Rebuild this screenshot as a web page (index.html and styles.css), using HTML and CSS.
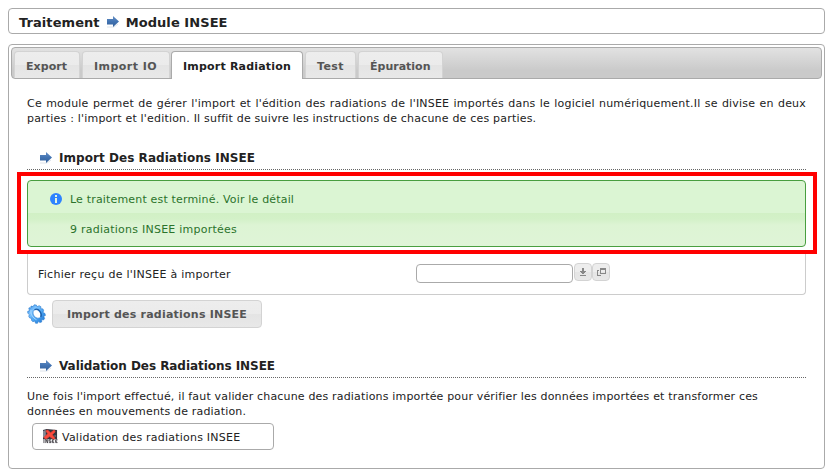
FILE: index.html
```html
<!DOCTYPE html>
<html lang="fr">
<head>
<meta charset="utf-8">
<title>Module INSEE</title>
<link rel="stylesheet" href="styles.css">
</head>
<body>
<svg class="defs" width="0" height="0" aria-hidden="true">
  <defs>
    <linearGradient id="blue" x1="0" y1="0" x2="0" y2="1"><stop offset="0" stop-color="#6790c4"/><stop offset=".5" stop-color="#4273b2"/><stop offset="1" stop-color="#335f99"/></linearGradient>
    <symbol id="arrow" viewBox="0 0 14 14"><path d="M1 12h7l4-3" stroke="#dde3ea" fill="none"/><path d="M1 4h6V1l6 5.500-6 5.500V9.500H1z" fill="url(#blue)"/></symbol>
  </defs>
</svg>
<header class="crumbs">Traitement <svg class="arrow"><use href="#arrow"/></svg> Module INSEE</header>
<main class="panel">
  <nav class="tabs">
    <a class="tab tab-export">Export</a>
    <a class="tab tab-io">Import IO</a>
    <a class="tab tab-active">Import Radiation</a>
    <a class="tab tab-test">Test</a>
    <a class="tab tab-epuration">Épuration</a>
  </nav>
  <div class="content">
    <p class="intro">Ce module permet de gérer l'import et l'édition des radiations de l'INSEE importés dans le logiciel numériquement.Il se divise en deux parties : l'import et l'edition. Il suffit de suivre les instructions de chacune de ces parties.</p>
    <h2 class="title title-import"><svg class="arrow"><use href="#arrow"/></svg>Import Des Radiations INSEE</h2>
    <div class="highlight">
      <div class="message">
        <svg class="info" viewBox="0 0 12 12"><circle cx="6" cy="6" r="6" fill="#2e83ff"/><path d="M5 2h2v2H5zM5 5h2v5H5z" fill="#e4f5e0"/></svg>
        <div class="message-text"><p class="done">Le traitement est terminé. Voir le détail</p><p class="count">9 radiations INSEE importées</p></div>
      </div>
    </div>
    <form class="fields">
      <label class="label" for="file">Fichier reçu de l'INSEE à importer</label>
      <input class="file" id="file" type="text">
      <button class="mini" type="button" aria-label="Charger"><svg viewBox="0 0 16 16"><path d="M7 4h2v3h2v1h-1v1H9v1H7V9H6V8H5V7h2zM5 11h6v1H5z" fill="#888"/></svg></button>
      <button class="mini" type="button" aria-label="Ouvrir"><svg viewBox="0 0 16 16"><path d="M7 4h6v6H7zM8 6v3h4V6zM4 6h2v1H5v4h3v1H4z" fill="#888" fill-rule="evenodd"/></svg></button>
    </form>
    <div class="actions">
      <svg class="gear" viewBox="0 0 20 20">
        <defs><linearGradient id="gearfill" x1="0" y1="0" x2="1" y2="1"><stop offset="0" stop-color="#2e88e2"/><stop offset=".3" stop-color="#7fc4ff"/><stop offset=".6" stop-color="#48a3f2"/><stop offset="1" stop-color="#1d6fce"/></linearGradient></defs>
        <path d="M4 2l2 .6L7.200.8l2.200.3.7 1.700 2-1.100 1.800 1-.1 2 2.200.2.700 2-1 1.400 2.300 1.200.4 2-1.700.8.900 2.300-1.100 1.400-1.900-.5.100 2.500-1.800.6-1.400-1.300-1 2-2-.1-.6-2.200-2 .7-1.500-1.400.3-1.900-2-.4-1.100-1.900 1-1.300-1.800-1.500-.1-2 1.900-.7-.800-2L2 3.800l1.900.1zM7 6.100c-1.500 1.600-1.200 4.400.4 6.300 1.900 2 4.800 2.400 6 .9 1.100-1.600.3-4.800-1.400-6.300-1.500-1.500-3.800-1.800-5-.9z" fill="url(#gearfill)" fill-rule="evenodd" stroke="#2779cc" stroke-width=".6"/>
        <path d="M4 6c-.8 3.700 1.700 8 5.500 9.700" fill="none" stroke="#b5deff" stroke-width=".8"/>
        <path d="M7.500 5.600c1.700-.7 4-.1 5.300 1.600 1.400 1.800 1.800 4.300 1 5.900" fill="none" stroke="#1b5da8" stroke-width="1.200"/>
      </svg>
      <button class="submit" type="button">Import des radiations INSEE</button>
    </div>
    <h2 class="title title-validation"><svg class="arrow"><use href="#arrow"/></svg>Validation Des Radiations INSEE</h2>
    <p class="explain">Une fois l'import effectué, il faut valider chacune des radiations importée pour vérifier les données importées et transformer ces données en mouvements de radiation.</p>
    <a class="validation">
      <svg class="insee" viewBox="0 0 16 16">
        <path d="M0 1l4-1 11 1v10H0z" fill="#343640"/>
        <path d="M0 2l3-1v8H0zM10 3h2v1h-2zM12 7h2v1h-2z" fill="#858894"/>
        <path d="M3 2l2-1 3 3 4-3 1 2-3 3 3 4-2 1-4-3-4 3-2-2 4-4z" fill="#fa4b3e" stroke="#e83a30" stroke-width=".7"/>
        <path d="M1 11v4M3 15v-4l2 4v-4M8.500 11.500h-2V13h2v1.500h-2M12 11.500h-2v3h2M10 13h1.500M15.500 11.500h-2v3h2M13.500 13H15" fill="none" stroke="#36343b" stroke-width=".9"/>
      </svg>
      <span>Validation des radiations INSEE</span>
    </a>
  </div>
</main>
</body>
</html>
```
FILE: styles.css
```css
* { box-sizing: border-box; }
body { margin: 8px 6px 0 8px; background: #fff; color: #222; font: 11px/15px "DejaVu Sans", Verdana, sans-serif; }
p, h2 { margin: 0; }
svg { display: block; flex: none; }
.defs { position: absolute; }
.arrow { width: 14px; height: 14px; }
.crumbs { display: flex; align-items: center; height: 26px; padding: 2px 10px 0; border: 1px solid #aaa; border-radius: 4px; font-size: 13px; font-weight: bold; letter-spacing: .07px; }
.crumbs .arrow { margin: 0 6px; }
.panel { height: 425px; margin-top: 10px; padding: 2px; border: 1px solid #aaa; border-radius: 4px; }
.tabs { display: flex; height: 32px; padding: 3px 2px 0; border: 1px solid #aaa; border-radius: 4px; background: linear-gradient(#e2e2e2, #cacaca 75%, #cacaca); }
.tab { height: 27px; margin-right: 2px; padding: 7px 0 0 11px; border: 1px solid #d3d3d3; border-bottom: 0; border-radius: 4px 4px 0 0; background: linear-gradient(#ededed, #ebebeb 50%, #e4e4e4 51%, #e8e8e8); color: #555; font-weight: bold; white-space: nowrap; }
.tab-export { width: 66px; letter-spacing: .08px; }
.tab-io { width: 88px; margin-right: 1px; letter-spacing: .45px; }
.tab-active { width: 132px; height: 28px; border-color: #aaa; background: #fff; color: #212121; letter-spacing: .2px; }
.tab-test { width: 51px; letter-spacing: .4px; }
.tab-epuration { width: 85px; }
.content { padding: 17px 16px 0; }
.intro { height: 30px; letter-spacing: .195px; text-align: justify; }
.title { display: flex; align-items: center; height: 20px; border-bottom: 1px dotted #666; padding: 0 0 3px 12px; font-size: 12px; line-height: 16px; }
.title .arrow { margin-right: 6px; }
.title-import { margin-top: 24px; letter-spacing: .05px; }
.highlight { height: 82px; margin: 2px -11px 0 -10px; padding: 4px 7px 3px 6px; border: 4px solid #f00; }
.message { display: flex; height: 67px; padding: 11px 22px; border: 1px solid #489e3f; border-radius: 4px; background: linear-gradient(#dbf5d3 0 32px, #d1f0c5 32px, #d3f1c8 38px, #ddf4d4 44px, #dff4d7); color: #2b732b; }
.info { width: 12px; height: 12px; margin: 1px 8px 0 0; }
.message-text p + p { margin-top: 15px; }
.done { letter-spacing: .17px; }
.count { letter-spacing: .24px; }
.fields { display: flex; height: 41px; padding: 9px 10px 0; border: 1px solid #ccc; border-top: 0; border-radius: 0 0 4px 4px; }
.label { width: 378px; padding-top: 4px; letter-spacing: .26px; }
.file { width: 157px; height: 19px; margin: 1px 1px 0 0; border: 1px solid #aaa; border-radius: 4px; background: #fff; }
.mini { width: 18px; height: 18px; padding: 0; border: 1px solid #d3d3d3; border-radius: 4px; background: linear-gradient(#ededed 50%, #e5e5e5 51%, #e8e8e8); }
.mini svg { width: 16px; height: 16px; }
.actions { display: flex; height: 28px; margin-top: 5px; }
.gear { width: 20px; height: 20px; margin: 4px 5px 0 0; }
.submit { width: 210px; padding: 0; border: 1px solid #d3d3d3; border-radius: 4px; background: linear-gradient(#ededed, #ebebeb 50%, #e4e4e4 51%, #e8e8e8); color: #555; font: bold 11px/15px "DejaVu Sans", Verdana, sans-serif; letter-spacing: .22px; }
.title-validation { margin-top: 30px; letter-spacing: -.05px; }
.explain { margin-top: 11px; padding-right: 20px; letter-spacing: .17px; }
.validation { display: flex; width: 242px; height: 27px; margin: 4px 0 0 5px; padding: 5px 10px 0; border: 1px solid #aaa; border-radius: 4px; }
.insee { width: 15px; height: 15px; margin-right: 4px; }
.validation span { padding-top: 1px; letter-spacing: .22px; }
```
